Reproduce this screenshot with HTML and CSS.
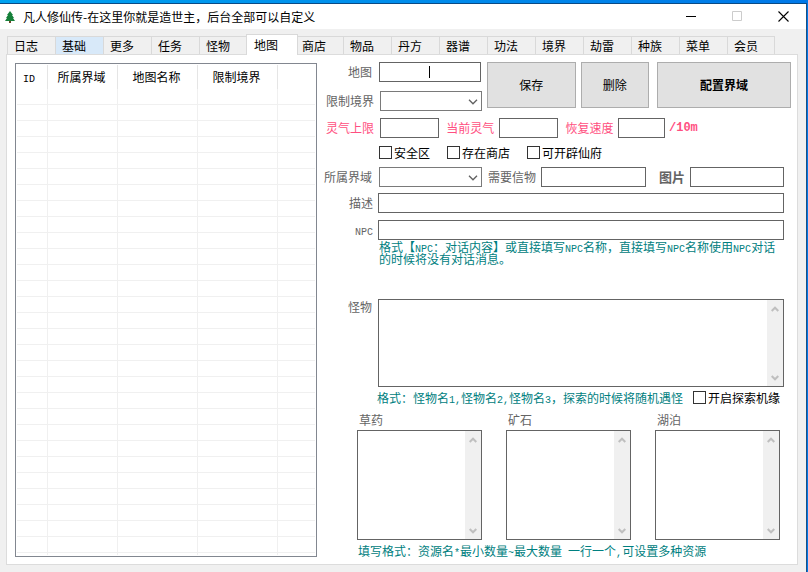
FILE: index.html
```html
<!DOCTYPE html>
<html lang="zh-CN">
<head>
<meta charset="utf-8">
<title>凡人修仙传</title>
<link rel="stylesheet" href="styles.css">
</head>
<body>
<svg class="defs" width="0" height="0" aria-hidden="true">
  <symbol id="up" viewBox="0 0 8 6"><path d="M.7 5 4 1.7 7.3 5" fill="none" stroke="#bfbfbf" stroke-width="2"/></symbol>
  <symbol id="down" viewBox="0 0 8 6"><path d="M.7 1 4 4.3 7.3 1" fill="none" stroke="#bfbfbf" stroke-width="2"/></symbol>
  <symbol id="chevron" viewBox="0 0 10 6"><path d="M1 .8 5 4.8 9 .8" fill="none" stroke="#606060" stroke-width="1.3"/></symbol>
</svg>
<div class="desktop">
<div class="window">
  <header class="titlebar">
    <svg class="logo" width="10" height="12" viewBox="0 0 10 12"><path d="M5 0 8 4H7l2 3H8l2 3H6v2H4v-2H0l2-3H1l2-3H2z" fill="#15803a"/><path d="M4 10h2v2H4z" fill="#6b4a2a"/></svg>
    <h1 class="title">凡人修仙传-在这里你就是造世主，后台全部可以自定义</h1>
    <button class="winbtn" aria-label="最小化"><svg width="11" height="11" viewBox="0 0 11 11"><path d="M0 5.5h10" stroke="#000"/></svg></button>
    <button class="winbtn" aria-label="最大化" disabled><svg width="11" height="11" viewBox="0 0 11 11"><path d="M.5.5h9v9h-9z" fill="none" stroke="#ccc"/></svg></button>
    <button class="winbtn" aria-label="关闭"><svg width="11" height="11" viewBox="0 0 11 11"><path d="m.5.5 10 10M10.500.5l-10 10" stroke="#000" stroke-width="1.100"/></svg></button>
  </header>
  <nav class="tabs">
    <button class="tab">日志</button><button class="tab hover">基础</button><button class="tab">更多</button><button class="tab">任务</button><button class="tab">怪物</button><button class="tab active">地图</button><button class="tab">商店</button><button class="tab">物品</button><button class="tab">丹方</button><button class="tab">器谱</button><button class="tab">功法</button><button class="tab">境界</button><button class="tab">劫雷</button><button class="tab">种族</button><button class="tab">菜单</button><button class="tab">会员</button>
  </nav>
  <main class="page">
    <div class="list">
      <table>
        <colgroup><col class="c-id"><col class="c-realm"><col class="c-name"><col class="c-name"><col></colgroup>
        <thead><tr><th><span class="latin">ID</span></th><th>所属界域</th><th>地图名称</th><th>限制境界</th><th></th></tr></thead>
        <tbody>
          <tr><td></td><td></td><td></td><td></td><td></td></tr>
          <tr><td></td><td></td><td></td><td></td><td></td></tr>
          <tr><td></td><td></td><td></td><td></td><td></td></tr>
          <tr><td></td><td></td><td></td><td></td><td></td></tr>
          <tr><td></td><td></td><td></td><td></td><td></td></tr>
          <tr><td></td><td></td><td></td><td></td><td></td></tr>
          <tr><td></td><td></td><td></td><td></td><td></td></tr>
          <tr><td></td><td></td><td></td><td></td><td></td></tr>
          <tr><td></td><td></td><td></td><td></td><td></td></tr>
          <tr><td></td><td></td><td></td><td></td><td></td></tr>
          <tr><td></td><td></td><td></td><td></td><td></td></tr>
          <tr><td></td><td></td><td></td><td></td><td></td></tr>
          <tr><td></td><td></td><td></td><td></td><td></td></tr>
          <tr><td></td><td></td><td></td><td></td><td></td></tr>
          <tr><td></td><td></td><td></td><td></td><td></td></tr>
          <tr><td></td><td></td><td></td><td></td><td></td></tr>
          <tr><td></td><td></td><td></td><td></td><td></td></tr>
          <tr><td></td><td></td><td></td><td></td><td></td></tr>
          <tr><td></td><td></td><td></td><td></td><td></td></tr>
          <tr><td></td><td></td><td></td><td></td><td></td></tr>
          <tr><td></td><td></td><td></td><td></td><td></td></tr>
          <tr><td></td><td></td><td></td><td></td><td></td></tr>
          <tr><td></td><td></td><td></td><td></td><td></td></tr>
          <tr><td></td><td></td><td></td><td></td><td></td></tr>
          <tr><td></td><td></td><td></td><td></td><td></td></tr>
          <tr><td></td><td></td><td></td><td></td><td></td></tr>
          <tr><td></td><td></td><td></td><td></td><td></td></tr>
          <tr><td></td><td></td><td></td><td></td><td></td></tr>
          <tr><td></td><td></td><td></td><td></td><td></td></tr>
          <tr class="stub"><td></td><td></td><td></td><td></td><td></td></tr>
        </tbody>
      </table>
    </div>
    <form class="form">
      <div class="top">
        <div class="pair">
          <div class="row"><label class="label" for="map">地图</label><input class="box caret" id="map" type="text"></div>
          <div class="row limit"><label class="label" for="limit">限制境界</label><span class="combo"><select id="limit"><option></option></select><svg width="10" height="6"><use href="#chevron"/></svg></span></div>
        </div>
        <button type="button" class="btn save">保存</button>
        <button type="button" class="btn remove">删除</button>
        <button type="button" class="btn config">配置界域</button>
      </div>
      <div class="row stats">
        <label class="label" for="max">灵气上限</label><input class="box" id="max" type="text">
        <label class="mid" for="cur">当前灵气</label><input class="box" id="cur" type="text">
        <label class="mid" for="speed">恢复速度</label><input class="box short" id="speed" type="text">
        <span class="unit">/10m</span>
      </div>
      <div class="row checks">
        <label class="check"><input type="checkbox">安全区</label>
        <label class="check"><input type="checkbox">存在商店</label>
        <label class="check"><input type="checkbox">可开辟仙府</label>
      </div>
      <div class="row realm">
        <label class="label" for="realm">所属界域</label><span class="combo"><select id="realm"><option></option></select><svg width="10" height="6"><use href="#chevron"/></svg></span>
        <label class="mid" for="token">需要信物</label><input class="box" id="token" type="text">
        <label class="picture" for="pic">图片</label><input class="box pic" id="pic" type="text">
      </div>
      <div class="row wide"><label class="label" for="desc">描述</label><input class="box" id="desc" type="text"></div>
      <div class="row wide npc"><label class="label" for="npc"><span class="latin">NPC</span></label><input class="box" id="npc" type="text"></div>
      <p class="hint npc-hint">格式【<span class="latin">NPC</span>：对话内容】或直接填写<span class="latin">NPC</span>名称，直接填写<span class="latin">NPC</span>名称使用<span class="latin">NPC</span>对话的时候将没有对话消息。</p>
      <div class="row wide monsters">
        <label class="label" for="monsters">怪物</label>
        <div class="area"><textarea id="monsters"></textarea><span class="bar"><svg width="8" height="6"><use href="#up"/></svg><svg width="8" height="6"><use href="#down"/></svg></span></div>
      </div>
      <div class="chance">
        <p class="hint">格式：怪物名<span class="latin">1,</span>怪物名<span class="latin">2,</span>怪物名<span class="latin">3</span>，探索的时候将随机遇怪</p>
        <label class="check"><input type="checkbox">开启探索机缘</label>
      </div>
      <div class="resources">
        <div class="res"><label for="herb">草药</label><div class="area"><textarea id="herb"></textarea><span class="bar"><svg width="8" height="6"><use href="#up"/></svg><svg width="8" height="6"><use href="#down"/></svg></span></div></div>
        <div class="res"><label for="ore">矿石</label><div class="area"><textarea id="ore"></textarea><span class="bar"><svg width="8" height="6"><use href="#up"/></svg><svg width="8" height="6"><use href="#down"/></svg></span></div></div>
        <div class="res"><label for="lake">湖泊</label><div class="area"><textarea id="lake"></textarea><span class="bar"><svg width="8" height="6"><use href="#up"/></svg><svg width="8" height="6"><use href="#down"/></svg></span></div></div>
      </div>
      <p class="hint res-hint">填写格式：资源名<span class="latin">*</span>最小数量<span class="latin">~</span>最大数量<span class="latin"> </span>一行一个<span class="latin">,</span>可设置多种资源</p>
    </form>
  </main>
</div>
</div>
</body>
</html>
```
FILE: styles.css
```css
* { box-sizing: border-box; }

body {
  margin: 0;
  font: 12px/16px "Noto Sans CJK SC", sans-serif;
  color: #000;
}

button, input, select, textarea { font: inherit; color: inherit; border-radius: 0; margin: 0; }
h1, p { margin: 0; }
.defs { position: absolute; }
.latin { font-family: "Liberation Mono", monospace; font-size: 10px; line-height: 0; white-space: pre; }

.desktop {
  min-height: 100vh;
  padding: 3px 1px 0 0;
  background: linear-gradient(90deg, #00a2f0, #0078e8);
  display: flex;
}

.window {
  flex: 1;
  min-width: 0;
  background: #f0f0f0;
  border-top: 1px solid #0a4a85;
  border-right: 1px solid #1b4f82;
  padding-bottom: 5px;
}

/* title bar */
.titlebar { display: flex; align-items: center; height: 25px; background: #fff; padding-left: 5px; }
.title { flex: 1; margin-left: 8px; font-size: 12px; font-weight: 400; white-space: nowrap; }
.winbtn { width: 46px; height: 25px; padding: 0; border: 0; background: none; display: flex; align-items: center; justify-content: center; }

/* tabs */
.tabs { display: flex; align-items: flex-end; height: 25px; padding-left: 7px; }
.tab {
  width: 48px;
  height: 18px;
  padding: 0 0 0 6px;
  border: 1px solid #d9d9d9;
  border-width: 1px 0 0 1px;
  background: #f0f0f0;
  text-align: left;
  line-height: 17px;
}
.tab:last-child { border-right-width: 1px; }
.tab.hover { background: #d8e9f9; }
.tab.active {
  width: 52px;
  height: 21px;
  margin: 0 -3px -1px -1px;
  padding: 0 0 2px 7px;
  border-width: 1px 1px 0;
  background: #fff;
  z-index: 1;
}

.page {
  display: flex;
  align-items: flex-start;
  margin: 0 8px 0 6px;
  padding: 7px 0 5px 8px;
  border: 1px solid #dcdcdc;
  background: #fff;
}

/* map list */
.list { flex: 0 0 302px; margin-top: 1px; padding: 1px; border: 1px solid #828790; }
.list table { width: 100%; table-layout: fixed; border-spacing: 0; }
.c-id { width: 31px; }
.c-realm { width: 70px; }
.c-name { width: 80px; }
th { height: 24px; padding: 0 2px 0 0; font-weight: 400; border-right: 1px solid #e5e5e5; }
th:first-child { padding-right: 6px; }
td { height: 16px; padding: 0; border: 1px solid #f0f0f0; border-width: 0 1px 1px 0; }
th:last-child, td:last-child { border-right: 0; }
.stub td { height: 2px; border-bottom: 0; }

/* form */
.form { flex: 1; min-width: 0; margin-left: 6px; color: #646464; }
.row { display: flex; align-items: center; margin: 6px 13px 0 0; }
.label { flex: none; width: 56px; padding-right: 7px; text-align: right; white-space: nowrap; }
.box { flex: 104 1 0; min-width: 0; height: 20px; padding: 0; border: 1px solid #646464; background: #fff; outline: 0; }
.caret { background: linear-gradient(#000, #000) center / 1px 12px no-repeat #fff; }

.combo { position: relative; flex: 104 1 0; min-width: 0; display: flex; }
.combo select { width: 100%; height: 20px; appearance: none; border: 1px solid #7a7a7a; background: #fff; }
.combo svg { position: absolute; right: 4px; top: 8px; pointer-events: none; }

.top { display: flex; align-items: flex-start; height: 50px; padding-right: 6px; }
.pair { flex: 161 1 0; min-width: 0; }
.pair .row { margin: 0; }
.pair .row:first-child { margin-right: 1px; }
.pair .row.limit { margin-top: 9px; }
.limit .label, .stats .label { width: 57px; padding-right: 6px; }

.btn { height: 46px; padding: 0; border: 1px solid #adadad; background: #e1e1e1; color: #000; }
.save { flex: 88 1 0; margin-left: 5px; }
.remove { flex: 67 1 0; margin-left: 5px; }
.config { flex: 134 1 0; margin-left: 8px; font-weight: 700; }

.stats { color: #ff4f81; }
.stats .box { flex: 59 1 0; }
.stats .short { flex: 46 1 0; }
.mid { flex: none; padding: 0 5px 0 7px; white-space: nowrap; }
.unit { flex: 0 0 119px; padding-left: 4px; font: 700 12px/16px "Liberation Mono", monospace; }

.checks { height: 17px; gap: 17px; padding-left: 56px; }
.check { display: flex; align-items: center; gap: 2px; color: #000; white-space: nowrap; }
.check input { appearance: none; width: 13px; height: 13px; border: 1px solid #333; background: #fff; }

.realm .mid { padding-left: 6px; }
.picture { flex: none; padding: 0 5px 0 13px; font-size: 13px; font-weight: 700; }
.pic { flex-grow: 93; }
.wide .label { width: 55px; padding-right: 5px; }
.npc { margin-top: 7px; }

.hint { color: #008080; }
.npc-hint { margin: 1px 13px 0 56px; padding-right: 6px; line-height: 12px; }

.area { flex: 1; display: flex; height: 88px; border: 1px solid #646464; background: #fff; }
.area textarea { flex: 1; min-width: 0; border: 0; padding: 2px; resize: none; outline: 0; background: #fff; }
.bar { flex: 0 0 16px; display: flex; flex-direction: column; justify-content: space-between; align-items: center; padding: 6px 0 5px; background: #f0f0f0; }

.monsters { align-items: flex-start; margin-top: 34px; }
.monsters .label { padding-right: 6px; }
.chance { display: flex; align-items: center; justify-content: space-between; height: 21px; margin: 0 17px 0 54px; }
.resources { display: flex; gap: 24px; margin: 4px 17px 0 34px; }
.res { flex: 1; min-width: 0; }
.res label { display: block; height: 18px; padding-left: 2px; }
.res .area { height: 110px; }
.res-hint { margin: 3px 17px 0 35px; }
```
